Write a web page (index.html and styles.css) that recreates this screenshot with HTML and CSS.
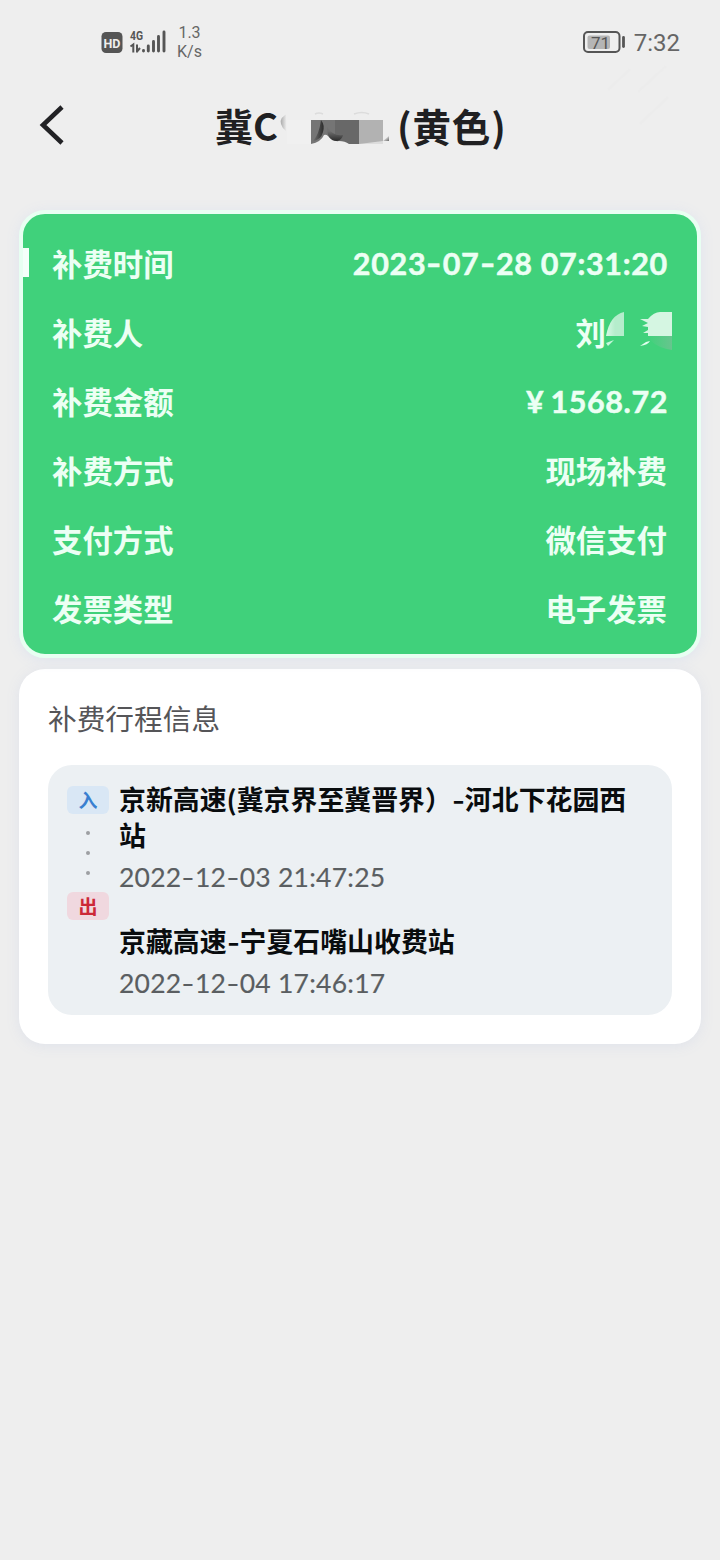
FILE: index.html
```
<!DOCTYPE html>
<html lang="zh-CN">
<head>
<meta charset="utf-8">
<title>补费详情</title>
<link rel="stylesheet" href="styles.css">
</head>
<body>
<div class="screen">
  <div class="status">
    <div class="status-left">
      <svg class="hd" width="22" height="21" viewBox="0 0 22 21"><rect x=".5" width="21" height="21" rx="4.500" fill="#555"/><text x="11" y="15.700" text-anchor="middle" textLength="17" lengthAdjust="spacingAndGlyphs" class="hd-text">HD</text></svg>
      <svg class="signal" width="37" height="30" viewBox="0 -3 37 30">
        <text x="0" y="10" textLength="13" lengthAdjust="spacingAndGlyphs" class="net-text">4G</text>
        <path d="M.5 16.500l2.800-2V22.500M7 14.500v8M7 21.500l3-3.500" fill="none" stroke="#555" stroke-width="2"/>
        <path d="M13.500 20.500v.5M18.300 16v5M23.500 11.500v9.500M28.500 6.500v14.500M34 2v19" stroke="#555" stroke-width="2.900" stroke-linecap="round"/>
      </svg>
      <div class="speed"><span>1.3</span><span>K/s</span></div>
    </div>
    <div class="status-right">
      <svg width="42" height="23" viewBox="0 0 42 23"><rect x="1" y="1" width="35.500" height="20" rx="4" fill="none" stroke="#555" stroke-width="2"/><rect x="4.500" y="4.500" width="22.500" height="13.500" rx="2" fill="#b5b5b5"/><path d="M40.500 6.500v9" stroke="#555" stroke-width="2.800" stroke-linecap="round"/><text x="17.500" y="17.500" text-anchor="middle" class="battery-text">71</text></svg>
      <span class="clock">7:32</span>
    </div>
  </div>

  <header class="nav">
    <svg class="back" width="26" height="42" viewBox="0 0 26 42"><path d="M23 3L4 21L23 39" fill="none" stroke="#222225" stroke-width="4.600"/></svg>
    <h1 class="title">
      <span class="plate">冀C</span>
      <svg class="mosaic" width="118" height="36" viewBox="0 0 118 36">
        <defs>
          <linearGradient id="fade" x1="0" x2="1"><stop offset="0" stop-color="#aaa"/><stop offset=".7" stop-color="#eee"/></linearGradient>
          <linearGradient id="fall" x1="0" x2="1" y1="0" y2="1"><stop offset=".3" stop-color="#eee"/><stop offset="1" stop-color="#666"/></linearGradient>
          <linearGradient id="dark" x1="0" x2="1"><stop offset="0" stop-color="#707070"/><stop offset="1" stop-color="#2c2c2c"/></linearGradient>
          <linearGradient id="bowl" x1="0" x2="0" y1="0" y2="1"><stop offset=".3" stop-color="#707070"/><stop offset="1" stop-color="#2c2c2c"/></linearGradient>
        </defs>
        <path d="M10 2Q0 6 2 13Q3 17 7 20V10Z" fill="url(#fade)"/>
        <path d="M36 3q4-2 8 0M75 3q8-3 15 0" fill="none" stroke="#dcdcdc" stroke-width="1.500"/>
        <rect x="8" y="9" width="24" height="24" fill="#f0f0f0"/>
        <rect x="32" y="9" width="24" height="24" fill="#757575"/>
        <rect x="56" y="9" width="24" height="24" fill="#686868"/>
        <rect x="80" y="9" width="24" height="24" fill="#b2b2b2"/>
        <path d="M32 33Q42 31 45 24Q47 23 49 25Q54 31 60 30Q66 30 70 33Z" fill="#eee"/>
        <path d="M42 9Q46 14 44 21Q42 29 34 30Q40 24 42 9Z" fill="url(#dark)"/>
        <path d="M48 16Q48 30 58 30Q63 29 64 24Q55 26 48 16Z" fill="url(#bowl)"/>
        <path d="M80 33L104 30V33Z" fill="#ddd"/>
        <path d="M104 30l6-5v5Z" fill="url(#fall)"/>
      </svg>
      <span class="color">(黄色)</span>
    </h1>
    <svg class="streaks" width="70" height="70" viewBox="0 0 70 70"><path d="M8 30L30 9M38 32L66 6M40 64L68 37" stroke="#ececec" stroke-width="2"/></svg>
  </header>

  <main class="content">
    <section class="pay">
      <i class="marker"></i>
      <div class="row"><span>补费时间</span><span class="num date">2023<span class="hyphen">-</span>07<span class="hyphen">-</span>28 07:31:20</span></div>
      <div class="row"><span>补费人</span><span class="name">刘<svg width="67" height="38" viewBox="0 0 67 38">
        <defs><linearGradient id="g1" x1="0" x2="1"><stop offset="0" stop-color="#d8f9e6"/><stop offset=".5" stop-color="#b5edcc"/></linearGradient>
        <linearGradient id="g2" x1="0" x2="1"><stop offset="0" stop-color="#40d27b"/><stop offset="1" stop-color="#67c58e"/></linearGradient></defs>
        <path d="M18 0V24H0Q4 3 18 0Z" fill="url(#g1)"/><path d="M0 31l8-3-6 6Z" fill="#c8f7dc"/>
        <path d="M34 7h8Q48 0 54 0h12V24H42v-3h-5l5-3v-3l-6-1 6-3Z" fill="#d5f6e2"/>
        <path d="M42 24h24v14Q52 36 44 28Z" fill="url(#g2)"/><path d="M34 34q8-1 10-5l-4 1Z" fill="#e0ffee"/>
      </svg></span></div>
      <div class="row"><span>补费金额</span><span class="num amount"><span class="yen">¥</span>1568.72</span></div>
      <div class="row"><span>补费方式</span><span>现场补费</span></div>
      <div class="row"><span>支付方式</span><span>微信支付</span></div>
      <div class="row"><span>发票类型</span><span>电子发票</span></div>
    </section>

    <section class="trip">
      <h2 class="trip-title">补费行程信息</h2>
      <div class="route">
        <div class="rail">
          <span class="tag in">入</span>
          <i class="dot"></i><i class="dot"></i><i class="dot"></i>
          <span class="tag out">出</span>
        </div>
        <div class="stops">
          <div class="stop"><p class="place">京新高速(冀京界至冀晋界）<span class="dash">-</span>河北下花园西<br>站</p><p class="time">2022<span class="hyphen">-</span>12<span class="hyphen">-</span>03 21:47:25</p></div>
          <div class="stop"><p class="place">京藏高速<span class="dash">-</span>宁夏石嘴山收费站</p><p class="time">2022<span class="hyphen">-</span>12<span class="hyphen">-</span>04 17:46:17</p></div>
        </div>
      </div>
    </section>
  </main>
</div>
</body>
</html>
```
FILE: styles.css
```
* { box-sizing: border-box; }
body { margin: 0; background: #eee; }
.screen {
  width: 720px; height: 1560px; overflow: hidden; background: #eee;
  font-family: "Noto Sans CJK SC", sans-serif; color: #202022;
}
svg { display: block; flex: none; }

.status { height: 84px; padding: 0 40px 0 101px; display: flex; justify-content: space-between; align-items: center; color: #666; font-family: Roboto, sans-serif; }
.status-left, .status-right { display: flex; align-items: center; }
.signal { margin-left: 7px; overflow: visible; }
.hd-text { font: bold 13px Roboto, sans-serif; fill: #eee; }
.net-text { font: bold 13px Roboto, sans-serif; fill: #555; }
.speed { margin-left: 9px; width: 27px; display: flex; flex-direction: column; align-items: center; font-size: 16px; line-height: 19px; }
.battery-text { font: 17px Roboto, sans-serif; fill: #555; }
.clock { margin-left: 9px; font-size: 24px; line-height: 28px; padding-top: 2px; }

.nav { height: 126px; position: relative; display: flex; align-items: flex-start; }
.back { margin: 20px 0 0 39px; }
.title { margin: 13px 0 0 150px; display: flex; align-items: center; height: 56px; font-size: 38px; line-height: 56px; font-weight: 700; }
.plate { width: 64px; white-space: nowrap; }
.mosaic { margin-top: 8px; }
.color { white-space: nowrap; font-size: 38.500px; letter-spacing: .9px; }
.streaks { position: absolute; left: 600px; top: -24px; }

.content { padding: 0 19px; }
.pay {
  position: relative; height: 448px; padding: 14px 30px 0 29px;
  border: 4px solid #e8fff2; border-radius: 26px; background: #40d17b;
  box-shadow: 0 2px 14px #dfe4ee;
  color: #ecfff4; font-size: 30.400px; font-weight: 700;
}
.marker { position: absolute; left: 0; top: 34px; width: 6px; height: 29px; background: #f5fffa; }
.row { height: 69px; display: flex; justify-content: space-between; align-items: center; line-height: 44px; }
.num { font-family: Lato, "Noto Sans CJK SC", sans-serif; font-size: 30.500px; -webkit-text-stroke: .5px #ecfff4; }
.date { letter-spacing: .68px; margin-right: -1px; }
.hyphen { display: inline-block; transform: scaleX(1.35); margin: 0 2.200px; }
.amount { letter-spacing: .6px; margin-right: -1px; }
.yen { margin-right: 6px; }
.name { display: flex; align-items: center; margin-right: -6px; }
.name svg { margin-top: -1px; }

.trip { margin-top: 11px; height: 375px; width: 682px; padding: 26px 29px 0; border-radius: 26px; background: #fff; box-shadow: 0 2px 14px #dfe2ea; }
.trip-title { margin: 0; font-size: 28.700px; line-height: 45px; font-weight: 400; color: #555558; }
.route { margin-top: 25px; height: 250px; padding: 16px 19px; border-radius: 24px; background: #ecf0f3; display: flex; gap: 10px; }
.rail { width: 42px; padding-top: 5px; display: flex; flex-direction: column; align-items: center; }
.tag { width: 42px; height: 28px; border-radius: 6px; text-align: center; font-size: 19px; line-height: 27px; font-weight: 700; }
.in { background: #d9e7f5; color: #397fd0; margin-bottom: 17px; }
.out { background: #f0d8df; color: #cc2837; margin-top: 1px; }
.dot { width: 4px; height: 4px; border-radius: 50%; background: #9d9fa2; margin-bottom: 16px; }
.stops { flex: 1; display: flex; flex-direction: column; gap: 28px; }
.place { margin: 0; font-size: 26.900px; line-height: 36px; font-weight: 700; color: #090c0e; white-space: nowrap; }
.dash { display: inline-block; width: 13px; text-align: center; transform: scaleX(1.25); }
.time { margin: 6px 0 -1px; font-family: Lato, sans-serif; font-size: 26.500px; line-height: 37px; color: #5a5e61; letter-spacing: .25px; -webkit-text-stroke: .15px #5a5e61; }
.time .hyphen { margin: 0 1.700px; }
```
